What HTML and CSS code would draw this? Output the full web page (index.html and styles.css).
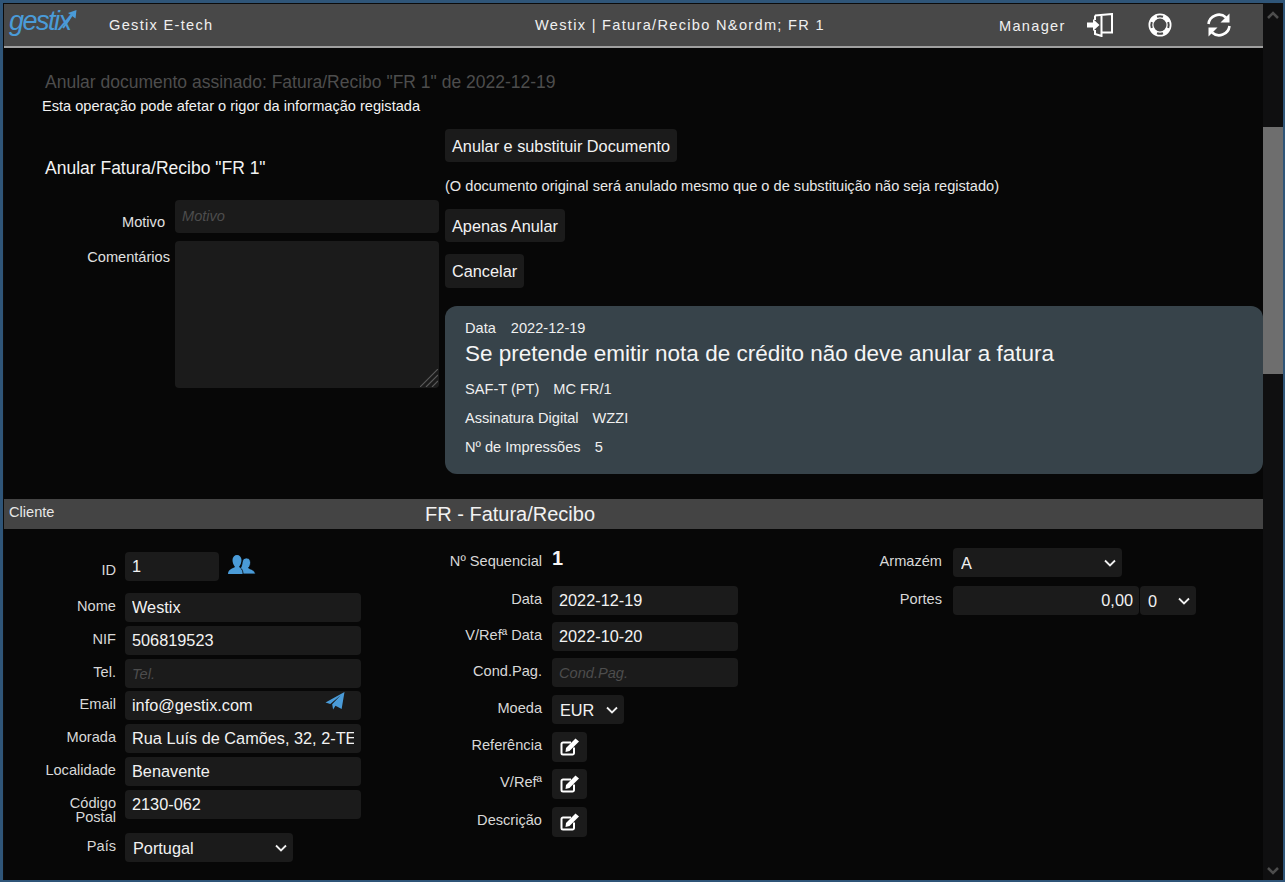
FILE: index.html
```html
<!DOCTYPE html>
<html lang="pt">

<head>
    <meta charset="UTF-8" />
    <title>Westix | Fatura/Recibo</title>
    <link rel="stylesheet" href="styles.css">
</head>

<body>
    <div class="window">
        <div class="page">
            <header class="topbar">
                <div class="logo">
                    <span class="logo-text">gestix</span>
                    <svg class="logo-arrow" viewBox="0 0 24 22" width="24" height="22">
                        <path d="M9 19 C12 15 15 11 18.500 5" fill="none" stroke="#4a9bd8" stroke-width="2" />
                        <path d="M14 4 L22.500 1 L21.500 9.500 Z" fill="#4a9bd8" />
                    </svg>
                </div>
                <span class="company">Gestix E-tech</span>
                <span class="doc-title">Westix | Fatura/Recibo N&amp;ordm; FR 1</span>
                <span class="user">Manager</span>
                <svg class="top-icon icon-door" viewBox="0 0 27 24" width="27" height="24">
                    <path d="M8 2.500 L25 1 V19.500 H15" fill="none" stroke="#fff" stroke-width="2" />
                    <path d="M14.500 3 V23 L8 21 V17" fill="none" stroke="#fff" stroke-width="2" />
                    <path d="M8 2.500 V7" fill="none" stroke="#fff" stroke-width="2" />
                    <path d="M0 9.500 H6 V6 L12.500 12 L6 18 V14.500 H0 Z" fill="#fff" />
                </svg>
                <svg class="top-icon icon-buoy" viewBox="0 0 24 24" width="24" height="24">
                    <circle cx="12" cy="12" r="9" fill="none" stroke="#fff" stroke-width="5" />
                    <path d="M9 3.800 A8.700 8.700 0 0 1 15 3.800 M20.200 9 A8.700 8.700 0 0 1 20.200 15 M15 20.200 A8.700 8.700 0 0 1 9 20.200 M3.800 15 A8.700 8.700 0 0 1 3.800 9" fill="none" stroke="#484848" stroke-width="2" />
                </svg>
                <svg class="top-icon icon-refresh" viewBox="0 0 26 26" width="26" height="26">
                    <path d="M2.500 12 A10.500 10.500 0 0 1 20 5.500" fill="none" stroke="#fff" stroke-width="2.600" />
                    <path d="M23.500 1.500 V10.500 H14.500 Z" fill="#fff" />
                    <path d="M23.500 14 A10.500 10.500 0 0 1 6 20.500" fill="none" stroke="#fff" stroke-width="2.600" />
                    <path d="M2.500 24.500 V15.500 H11.500 Z" fill="#fff" />
                </svg>
            </header>

            <section class="cancel">
                <h2 class="cancel-title">Anular documento assinado: Fatura/Recibo "FR 1" de 2022-12-19</h2>
                <p class="cancel-warning">Esta operação pode afetar o rigor da informação registada</p>

                <div class="cancel-body">
                    <div class="cancel-form">
                        <h3 class="cancel-subtitle">Anular Fatura/Recibo "FR 1"</h3>
                        <div class="reason-row">
                            <label class="reason-label">Motivo</label>
                            <input class="field reason-input" placeholder="Motivo">
                        </div>
                        <div class="reason-row">
                            <label class="reason-label reason-label-wide">Comentários</label>
                            <div class="reason-box">
                                <textarea class="field reason-text"></textarea>
                                <svg class="resize-grip" viewBox="0 0 18 18" width="18" height="18">
                                    <path d="M0 18 L18 0 M6 18 L18 6 M12 18 L18 12" stroke="#5a5a5a" stroke-width="1.200" />
                                </svg>
                            </div>
                        </div>
                    </div>

                    <div class="cancel-actions">
                        <button class="btn">Anular e substituir Documento</button>
                        <p class="action-note">(O documento original será anulado mesmo que o de substituição não seja registado)</p>
                        <button class="btn">Apenas Anular</button>
                        <button class="btn btn-cancel">Cancelar</button>

                        <div class="info-panel">
                            <p class="info-line info-date"><span>Data</span><span>2022-12-19</span></p>
                            <p class="info-headline">Se pretende emitir nota de crédito não deve anular a fatura</p>
                            <p class="info-line"><span>SAF-T (PT)</span><span>MC FR/1</span></p>
                            <p class="info-line"><span>Assinatura Digital</span><span>WZZI</span></p>
                            <p class="info-line"><span>Nº de Impressões</span><span>5</span></p>
                        </div>
                    </div>
                </div>
            </section>

            <div class="doc-bar">
                <span class="doc-bar-client">Cliente</span>
                <span class="doc-bar-title">FR - Fatura/Recibo</span>
            </div>

            <section class="doc-form">
                <div class="col col-client">
                    <div class="row row-id">
                        <label class="lbl lbl-id">ID</label>
                        <input class="field input-id" value="1">
                        <svg class="people-icon" viewBox="0 0 28 20" width="28" height="20">
                            <path d="M0 19 C0 14 5 13.500 7 12 C5 9 4.500 7 4.500 5 C4.500 2 6.500 0 9 0 C11.500 0 13.500 2 13.500 5 C13.500 7 13 9 11 12 C13 13.500 17 14 18 19 Z" fill="#4a9bd8" />
                            <path d="M15 19 C15 16 14 14 12.500 13 C14 10.500 14 8 14.500 6 C15 4 16.500 3 18.500 3 C21 3 22.500 5 22.500 7.500 C22.500 9.500 22 11 20.500 13 C22.500 14.500 26.500 14.500 27.500 19 Z" fill="#4a9bd8" stroke="#070707" stroke-width="0.800" />
                        </svg>
                    </div>
                    <div class="row"><label class="lbl">Nome</label><input class="field input-wide" value="Westix"></div>
                    <div class="row"><label class="lbl">NIF</label><input class="field input-wide" value="506819523"></div>
                    <div class="row row-tel"><label class="lbl">Tel.</label><input class="field input-wide" placeholder="Tel."></div>
                    <div class="row">
                        <label class="lbl">Email</label>
                        <div class="email-box">
                            <input class="field input-wide" value="info@gestix.com">
                            <svg class="send-icon" viewBox="0 0 20 20" width="20" height="19">
                                <path d="M0 11 L20 0 L17 18 L10.500 14.500 L8 18.500 L7 13 L16 3.500 L5 12.500 Z" fill="#4a9bd8" />
                            </svg>
                        </div>
                    </div>
                    <div class="row"><label class="lbl">Morada</label><input class="field input-wide" value="Rua Luís de Camões, 32, 2-TE"></div>
                    <div class="row"><label class="lbl">Localidade</label><input class="field input-wide" value="Benavente"></div>
                    <div class="row"><label class="lbl lbl-two">Código<br>Postal</label><input class="field input-wide" value="2130-062"></div>
                    <div class="row row-country">
                        <label class="lbl">País</label>
                        <select class="field select select-country"><option>Portugal</option></select>
                    </div>
                </div>

                <div class="col col-doc">
                    <div class="row row-seq"><label class="lbl lbl-seq">Nº Sequencial</label><strong class="seq-value">1</strong></div>
                    <div class="row row-date"><label class="lbl">Data</label><input class="field input-doc" value="2022-12-19"></div>
                    <div class="row row-date"><label class="lbl">V/Refª Data</label><input class="field input-doc" value="2022-10-20"></div>
                    <div class="row row-date row-cond"><label class="lbl">Cond.Pag.</label><input class="field input-doc" placeholder="Cond.Pag."></div>
                    <div class="row row-date row-cond"><label class="lbl">Moeda</label><select class="field select select-coin"><option>EUR</option></select></div>
                    <div class="row row-edit">
                        <label class="lbl">Referência</label>
                        <button class="edit-btn">
                            <svg viewBox="0 0 20 18" width="20" height="18">
                                <path d="M14 9.500 V15 A1.500 1.500 0 0 1 12.500 16.500 H3 A1.500 1.500 0 0 1 1.500 15 V6 A1.500 1.500 0 0 1 3 4.500 H11" fill="none" stroke="#fff" stroke-width="2" />
                                <path d="M6 10 L15.500 0.500 L19 3.500 L9.500 13 L5.500 14 Z" fill="#fff" />
                            </svg>
                        </button>
                    </div>
                    <div class="row row-edit">
                        <label class="lbl">V/Refª</label>
                        <button class="edit-btn">
                            <svg viewBox="0 0 20 18" width="20" height="18">
                                <path d="M14 9.500 V15 A1.500 1.500 0 0 1 12.500 16.500 H3 A1.500 1.500 0 0 1 1.500 15 V6 A1.500 1.500 0 0 1 3 4.500 H11" fill="none" stroke="#fff" stroke-width="2" />
                                <path d="M6 10 L15.500 0.500 L19 3.500 L9.500 13 L5.500 14 Z" fill="#fff" />
                            </svg>
                        </button>
                    </div>
                    <div class="row row-edit">
                        <label class="lbl">Descrição</label>
                        <button class="edit-btn">
                            <svg viewBox="0 0 20 18" width="20" height="18">
                                <path d="M14 9.500 V15 A1.500 1.500 0 0 1 12.500 16.500 H3 A1.500 1.500 0 0 1 1.500 15 V6 A1.500 1.500 0 0 1 3 4.500 H11" fill="none" stroke="#fff" stroke-width="2" />
                                <path d="M6 10 L15.500 0.500 L19 3.500 L9.500 13 L5.500 14 Z" fill="#fff" />
                            </svg>
                        </button>
                    </div>
                </div>

                <div class="col col-store">
                    <div class="row row-store"><label class="lbl lbl-store">Armazém</label><select class="field select select-store"><option>A</option></select></div>
                    <div class="row row-store">
                        <label class="lbl lbl-store">Portes</label>
                        <input class="field input-money" value="0,00">
                        <select class="field select select-tax"><option>0</option></select>
                    </div>
                </div>
            </section>
        </div>

        <div class="scrollbar">
            <svg class="scroll-arrow" viewBox="0 0 12 8" width="12" height="8"><path d="M1 7 L6 2 L11 7" fill="none" stroke="#4d4d4d" stroke-width="2.500" /></svg>
            <div class="scroll-thumb"></div>
            <svg class="scroll-arrow scroll-arrow-down" viewBox="0 0 12 8" width="12" height="8"><path d="M1 1 L6 6 L11 1" fill="none" stroke="#4d4d4d" stroke-width="2.500" /></svg>
        </div>
    </div>
</body>

</html>
```

FILE: styles.css
```css
* {
    box-sizing: border-box;
}

html,
body {
    height: 100%;
}

body {
    margin: 0;
    overflow: hidden;
    background: #2f5578;
    font-family: "Liberation Sans", Arial, sans-serif;
    font-size: 14.6px;
    color: #e8e8e8;
}

.window {
    display: flex;
    width: 1285px;
    height: 882px;
    border: solid #2f5578;
    border-width: 3px 2px 2px 3px;
}

.page {
    width: 1260px;
    height: 877px;
    overflow: hidden;
    background: #070707;
    border-left: 1px solid #0b0b0b;
    border-top: 1px solid #0b0b0b;
}

/* header */
.topbar {
    display: flex;
    align-items: center;
    height: 44px;
    background: #484848;
    border-bottom: 2px solid #a0a0a0;
    letter-spacing: 1.3px;
    color: #f0f0f0;
}

.logo {
    position: relative;
    width: 105px;
    height: 42px;
    flex: none;
}

.logo-text {
    position: absolute;
    left: 5px;
    top: 2px;
    font-size: 27px;
    font-style: italic;
    letter-spacing: -1.500px;
    color: #4a9bd8;
}

.logo-arrow {
    position: absolute;
    left: 50px;
    top: 5px;
}

.company {
    width: 426px;
    flex: none;
}

.doc-title {
    width: 464px;
    flex: none;
}

.user {
    width: 88px;
    flex: none;
    margin-top: 2px;
}

.top-icon {
    flex: none;
}

.icon-door {
    margin-right: 34px;
}

.icon-buoy {
    margin-right: 34px;
}

/* annul block */
.cancel {
    height: 451px;
    padding-top: 24px;
}

.cancel-title {
    margin: 0 0 0 41px;
    font-size: 17.500px;
    font-weight: normal;
    line-height: 21px;
    color: #4d4d4d;
}

.cancel-warning {
    margin: 5px 0 0 38px;
    line-height: 16px;
    color: #f2f2f2;
}

.cancel-body {
    display: flex;
    margin-top: 15px;
}

.cancel-form {
    width: 441px;
    flex: none;
}

.cancel-subtitle {
    margin: 30px 0 23px 41px;
    font-size: 17.500px;
    font-weight: normal;
    line-height: 18px;
    color: #f2f2f2;
}

.reason-row {
    display: flex;
    margin-bottom: 8px;
}

.reason-label {
    width: 161px;
    padding-top: 14px;
    text-align: right;
    color: #e0e0e0;
}

.reason-label-wide {
    width: 166px;
    padding-top: 8px;
    margin-right: -5px;
}

.field {
    height: 29px;
    padding: 0 7px;
    border: 0;
    border-radius: 4px;
    outline: 0;
    background: #1b1b1b;
    font-family: inherit;
    font-size: 16.300px;
    color: #f2f2f2;
}

.field::placeholder {
    font-size: 14.600px;
    font-style: italic;
    color: #4d4d4d;
    opacity: 1;
}

.reason-input {
    width: 264px;
    height: 33px;
    margin-left: 10px;
    padding-bottom: 2px;
}

.reason-box {
    position: relative;
    margin-left: 10px;
}

.reason-text {
    display: block;
    width: 264px;
    height: 147px;
    resize: none;
}

.resize-grip {
    position: absolute;
    right: 1px;
    bottom: 1px;
}

.cancel-actions {
    width: 818px;
    flex: none;
}

.btn {
    display: block;
    height: 33px;
    padding: 1px 7px 0;
    border: 0;
    border-radius: 4px;
    background: #1b1b1b;
    font-family: inherit;
    font-size: 16.300px;
    color: #f2f2f2;
}

.action-note {
    margin: 16px 0 15px;
    line-height: 16px;
    color: #e8e8e8;
}

.btn-cancel {
    height: 34px;
    margin-top: 12px;
}

.info-panel {
    height: 168px;
    margin-top: 18px;
    padding: 14px 20px;
    border-radius: 12px;
    background: #37434a;
    color: #f0f0f0;
}

.info-panel p {
    margin: 0;
}

.info-panel .info-line {
    display: flex;
    gap: 14px;
    margin-bottom: 13px;
    line-height: 16px;
}

.info-panel .info-date {
    gap: 15px;
    margin-bottom: 0;
}

.info-panel .info-headline {
    margin: 5px 0 15px;
    font-size: 22.500px;
    line-height: 25px;
    color: #f5f5f5;
}

/* document bar */
.doc-bar {
    display: flex;
    height: 30px;
    background: #444;
}

.doc-bar-client {
    width: 421px;
    padding: 5px 0 0 5px;
    line-height: 16px;
    color: #e8e8e8;
}

.doc-bar-title {
    font-size: 20px;
    line-height: 30px;
    color: #f2f2f2;
}

/* document form */
.doc-form {
    display: grid;
    grid-template-columns: 408px 400px 1fr;
}

.row {
    display: flex;
    align-items: flex-start;
    margin-bottom: 4px;
}

.lbl {
    flex: none;
    padding-top: 5px;
    line-height: 16px;
    text-align: right;
    color: #d8d8d8;
}

.col-client {
    padding-top: 23px;
}

.col-client .lbl {
    width: 112px;
    margin-right: 9px;
}

.col-client .lbl-id {
    padding-top: 10px;
}

.col-client .lbl-two {
    padding-top: 6px;
    line-height: 14px;
}

.row-id {
    margin-bottom: 12px;
}

.row-tel {
    margin-bottom: 3px;
}

.row-country {
    margin-top: 9px;
}

.input-id {
    width: 94px;
}

.people-icon {
    flex: none;
    margin: 3px 0 0 9px;
}

.input-wide {
    width: 236px;
}

.email-box {
    position: relative;
}

.send-icon {
    position: absolute;
    right: 16px;
    top: 1px;
}

.select {
    appearance: none;
    padding-left: 8px;
    padding-right: 24px;
    background: #1b1b1b url("data:image/svg+xml,%3Csvg xmlns='http://www.w3.org/2000/svg' width='12' height='8'%3E%3Cpath d='M1 1.500l5 5 5-5' fill='none' stroke='%23f0f0f0' stroke-width='1.800'/%3E%3C/svg%3E") no-repeat right 6px center;
}

.select-country {
    width: 168px;
}

.col-doc {
    padding-top: 24px;
}

.col-doc .lbl {
    width: 130px;
    margin-right: 10px;
}

.row-seq {
    height: 29px;
    margin-bottom: 4px;
}

.col-doc .lbl-seq {
    padding-top: 0;
}

.seq-value {
    margin-top: -6px;
    font-size: 20px;
    line-height: 23px;
    color: #f5f5f5;
}

.row-date {
    margin-bottom: 7px;
}

.row-cond {
    margin-bottom: 8px;
}

.input-doc {
    width: 186px;
}

.select-coin {
    width: 72px;
}

.row-edit {
    height: 30px;
    margin-bottom: 7px;
}

.row-edit:nth-child(7) {
    margin-bottom: 8px;
}

.edit-btn {
    display: flex;
    align-items: center;
    justify-content: center;
    width: 35px;
    height: 30px;
    padding: 0;
    border: 0;
    border-radius: 4px;
    background: #1b1b1b;
}

.col-store {
    padding-top: 19px;
}

.col-store .lbl {
    width: 130px;
    margin-right: 11px;
}

.row-store {
    margin-bottom: 9px;
}

.select-store {
    width: 169px;
}

.input-money {
    width: 186px;
    padding-right: 6px;
    text-align: right;
}

.select-tax {
    width: 56px;
    margin-left: 1px;
}

/* fake scrollbar */
.scrollbar {
    display: flex;
    flex-direction: column;
    align-items: center;
    width: 20px;
    height: 877px;
    padding-top: 8px;
    background: #0f0f10;
}

.scroll-arrow {
    flex: none;
}

.scroll-thumb {
    width: 20px;
    height: 247px;
    margin-top: 108px;
    background: #6e6e6e;
}

.scroll-arrow-down {
    margin-top: auto;
    margin-bottom: 5px;
}
```
